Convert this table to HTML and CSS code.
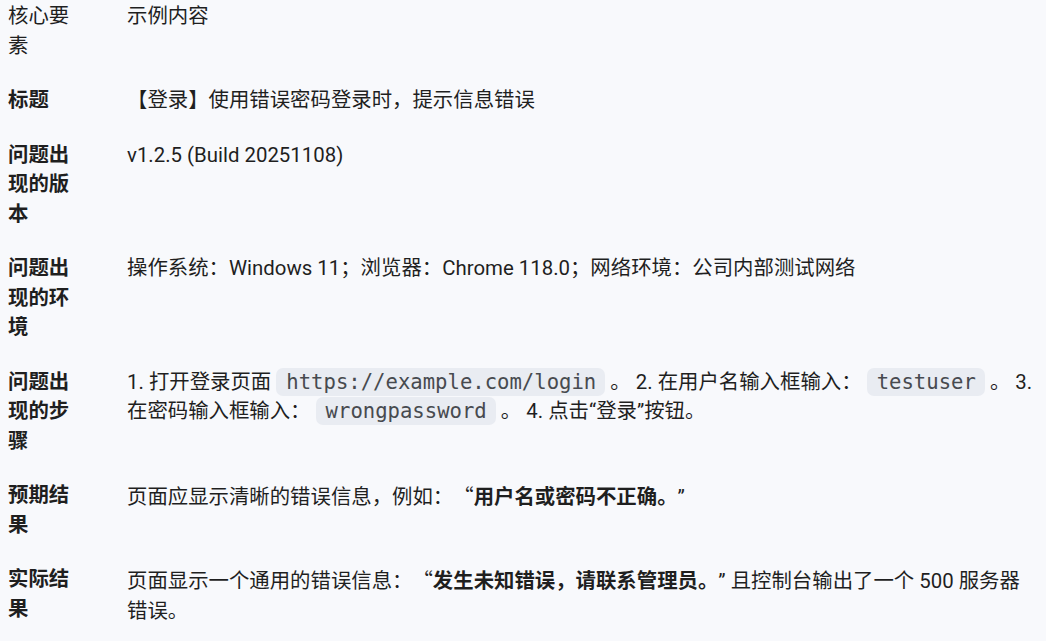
FILE: index.html
```html
<!DOCTYPE html>
<html lang="zh-CN">
<head>
<meta charset="utf-8">
<title>缺陷报告</title>
<link rel="stylesheet" href="styles.css">
</head>
<body>
<div class="spec">
  <div class="row">
    <div class="label plain">核心要素</div>
    <div class="value">示例内容</div>
  </div>
  <div class="row">
    <div class="label">标题</div>
    <div class="value">【登录】使用错误密码登录时，提示信息错误</div>
  </div>
  <div class="row">
    <div class="label">问题出现的版本</div>
    <div class="value">v1.2.5 (Build 20251108)</div>
  </div>
  <div class="row">
    <div class="label">问题出现的环境</div>
    <div class="value">操作系统：Windows 11；浏览器：Chrome 118.0；网络环境：公司内部测试网络</div>
  </div>
  <div class="row">
    <div class="label">问题出现的步骤</div>
    <div class="value">1. 打开登录页面 <code class="code">https://example.com/login</code> 。 2. 在用户名输入框输入： <code class="code">testuser</code> 。 3. 在密码输入框输入： <code class="code">wrongpassword</code> 。 4. 点击“登录”按钮。</div>
  </div>
  <div class="row">
    <div class="label">预期结果</div>
    <div class="value">页面应显示清晰的错误信息，例如：<span class="cjk-quote">“</span><strong>用户名或密码不正确。</strong>”</div>
  </div>
  <div class="row">
    <div class="label">实际结果</div>
    <div class="value">页面显示一个通用的错误信息：<span class="cjk-quote">“</span><strong>发生未知错误，请联系管理员。</strong>” 且控制台输出了一个 500 服务器错误。</div>
  </div>
</div>
</body>
</html>
```

FILE: styles.css
```css
html, body {
  margin: 0;
  padding: 0;
  background: #f8f9fc;
}

body {
  font-family: "Roboto", "Noto Sans CJK SC", sans-serif;
  font-size: 20.4px;
  line-height: 29.5px;
  color: #1f1f1f;
  text-spacing-trim: space-all;
}

.spec {
  display: flex;
  flex-direction: column;
  padding: 2px 13px 0 8px;
}

.row {
  display: grid;
  grid-template-columns: 72px 1fr;
  column-gap: 47px;
  padding: 12.5px 0;
}

.row:first-child {
  padding-top: 0;
}

.label {
  font-weight: 700;
}

.label.plain {
  font-weight: 400;
}

.value strong {
  font-weight: 700;
}

.cjk-quote {
  font-family: "Noto Sans CJK SC", sans-serif;
}

.code {
  font-family: "DejaVu Sans Mono", monospace;
  font-size: 20.6px;
  color: #474a4f;
  background: #e9ecf2;
  border-radius: 7px;
  padding: 2px 9px 2px 10px;
}
```
